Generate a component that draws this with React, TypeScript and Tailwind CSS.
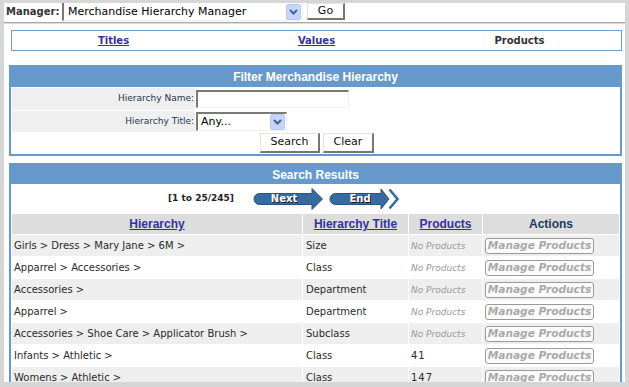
import React from 'react';

const rows = [
  { name: 'Girls > Dress > Mary Jane > 6M >', title: 'Size', products: null },
  { name: 'Apparrel > Accessories >', title: 'Class', products: null },
  { name: 'Accessories >', title: 'Department', products: null },
  { name: 'Apparrel >', title: 'Department', products: null },
  { name: 'Accessories > Shoe Care > Applicator Brush >', title: 'Subclass', products: null },
  { name: 'Infants > Athletic >', title: 'Class', products: '41' },
  { name: 'Womens > Athletic >', title: 'Class', products: '147' },
];

function DropButton() {
  return (
    <span className="flex h-[16px] w-[15px] items-center justify-center rounded-[2px] border border-[#b9c9ef] bg-[#c4d4fb]">
      <svg width="9" height="6" viewBox="0 0 9 6">
        <path d="M1 1 L4.5 4.5 L8 1" fill="none" stroke="#4d6185" strokeWidth="2" />
      </svg>
    </span>
  );
}

function ArrowButton({ label, end }: { label: string; end?: boolean }) {
  return (
    <div className="relative h-[22px] w-[70px]">
      <svg className="absolute inset-0" width="70" height="22" viewBox="0 0 70 22">
        {end ? (
          <>
            <path
              d="M6.5 5.5 H52 V1 L60 11 L52 21 V16.5 H6.5 A5.5 5.5 0 0 1 6.5 5.5 Z"
              fill="#376b9f"
              stroke="#28527f"
            />
            <path d="M60.5 1.5 L68.5 11 L60.5 20.5" fill="none" stroke="#376b9f" strokeWidth="2.6" />
          </>
        ) : (
          <path
            d="M6.5 5.5 H59 V0.5 L69.5 11 L59 21.5 V16.5 H6.5 A5.5 5.5 0 0 1 6.5 5.5 Z"
            fill="#376b9f"
            stroke="#28527f"
          />
        )}
      </svg>
      <span className="absolute left-0 top-[4px] w-[62px] text-center font-['DejaVu_Sans',sans-serif] text-[10px] font-bold leading-[13px] text-white [text-shadow:1px_1px_0_#1a1a1a]">
        {label}
      </span>
    </div>
  );
}

function ClassicButton({ children, className }: { children: React.ReactNode; className: string }) {
  return (
    <button
      className={`flex items-center justify-center border-b-2 border-l border-r-2 border-t border-b-[#77776f] border-l-[#e4e4e4] border-r-[#77776f] border-t-[#e4e4e4] bg-white font-['DejaVu_Sans',sans-serif] text-[11px] text-[#111] ${className}`}
    >
      {children}
    </button>
  );
}

export default function App() {
  return (
    <div className="h-[387px] w-[629px] bg-[#d6d6d6] px-[4px] pb-[5px] pt-[3px]">
      <div className="h-[379px] overflow-hidden bg-white">
        {/* manager bar */}
        <div className="flex h-[18px] items-start">
          <span className="ml-[2px] mt-[3px] w-[56px] font-['DejaVu_Sans',sans-serif] text-[10px] font-bold leading-[12px] text-[#333]">
            Manager:
          </span>
          <div className="flex h-[18px] w-[241px] items-center border-l-2 border-r border-b border-l-[#7a7a72] border-r-[#f0f0ea] border-b-[#f0f0ea] pl-[4px] pr-[1px]">
            <span className="flex-1 pt-[1px] font-['DejaVu_Sans',sans-serif] text-[11px] leading-[14px] text-black">
              Merchandise Hierarchy Manager
            </span>
            <DropButton />
          </div>
          <ClassicButton className="ml-[4px] h-[17px] w-[38px]">Go</ClassicButton>
        </div>
        <div className="mt-[1px] h-[2px] border-t border-b border-t-[#a8a8a8] border-b-[#dcdcdc]" />

        {/* nav */}
        <div className="ml-[7px] mt-[6px] grid h-[21px] w-[611px] grid-cols-3 items-center border border-[#6f9ccc] font-['DejaVu_Sans',sans-serif] text-[10px] font-bold">
          <a className="text-center text-[#333399] underline">Titles</a>
          <a className="text-center text-[#333399] underline">Values</a>
          <span className="text-center text-[#333]">Products</span>
        </div>

        {/* filter */}
        <div className="ml-[5px] mt-[14px] w-[613px] border-2 border-[#6699cc]">
          <div className="flex h-[20px] items-center justify-center bg-[#6699cc] font-['Liberation_Sans',sans-serif] text-[12px] font-bold text-white">
            Filter Merchandise Hierarchy
          </div>
          <table className="w-full border-separate border-spacing-[1px]">
            <tbody>
              <tr>
                <td className="h-[22px] w-[183px] bg-[#efefef] pr-[1px] text-right font-['DejaVu_Sans',sans-serif] text-[9px] text-[#1d3557]">
                  Hierarchy Name:
                </td>
                <td className="p-0">
                  <div className="h-[18px] w-[153px] border-l-2 border-t-2 border-r border-b border-l-[#7a7a72] border-t-[#7a7a72] border-r-[#f0f0ea] border-b-[#f0f0ea]" />
                </td>
              </tr>
              <tr>
                <td className="h-[21px] bg-[#efefef] pr-[1px] text-right font-['DejaVu_Sans',sans-serif] text-[9px] text-[#1d3557]">
                  Hierarchy Title:
                </td>
                <td className="p-0">
                  <div className="flex h-[19px] w-[91px] items-center border-l-2 border-t-2 border-r border-b border-l-[#7a7a72] border-t-[#7a7a72] border-r-[#f0f0ea] border-b-[#f0f0ea] pl-[3px] pr-[1px]">
                    <span className="flex-1 font-['DejaVu_Sans',sans-serif] text-[11px] text-black">Any...</span>
                    <DropButton />
                  </div>
                </td>
              </tr>
              <tr>
                <td colSpan={2} className="h-[20px] p-0">
                  <div className="flex justify-center gap-[3px] pl-[3px]">
                    <ClassicButton className="h-[20px] w-[60px]">Search</ClassicButton>
                    <ClassicButton className="h-[20px] w-[51px]">Clear</ClassicButton>
                  </div>
                </td>
              </tr>
            </tbody>
          </table>
        </div>

        {/* results */}
        <div className="ml-[5px] mt-[7px] w-[613px] border-2 border-[#6699cc]">
          <div className="flex h-[19px] items-center justify-center bg-[#6699cc] font-['Liberation_Sans',sans-serif] text-[12px] font-bold text-white">
            Search Results
          </div>
          <div className="flex h-[29px] items-center pl-[157px]">
            <span className="w-[85px] font-['DejaVu_Sans',sans-serif] text-[9px] font-bold text-[#222]">
              [1 to 25/245]
            </span>
            <ArrowButton label="Next" />
            <div className="w-[6px]" />
            <ArrowButton label="End" end />
          </div>
          <table className="w-full border-separate border-spacing-[1px]">
            <thead>
              <tr className="font-['Liberation_Sans',sans-serif] text-[12px] font-bold">
                <th className="h-[20px] w-[290px] bg-[#dddddd] p-0 text-center text-[#333399] underline">Hierarchy</th>
                <th className="w-[105px] bg-[#dddddd] p-0 text-center text-[#333399] underline">Hierarchy Title</th>
                <th className="w-[73px] bg-[#dddddd] p-0 text-center text-[#333399] underline">Products</th>
                <th className="bg-[#dddddd] p-0 text-center text-[#1c3a63]">Actions</th>
              </tr>
            </thead>
            <tbody className="font-['DejaVu_Sans',sans-serif] text-[10px] text-[#2a2a2a]">
              {rows.map((r, i) => (
                <tr key={i} className={i % 2 === 0 ? 'bg-[#eeeeee]' : 'bg-white'}>
                  <td className="h-[21px] p-0 pl-[2px]">{r.name}</td>
                  <td className="p-0 pl-[3px]">{r.title}</td>
                  <td className="p-0 pl-[2px]">
                    {r.products ? (
                      <span className="tracking-[1px]">{r.products}</span>
                    ) : (
                      <span className="text-[9px] italic text-[#999]">No Products</span>
                    )}
                  </td>
                  <td className="p-0 pl-[2px]">
                    <span className="flex h-[16px] w-[109px] items-center justify-center rounded-[3px] border border-[#9a9a9a] bg-[#fbfbfb] text-[10.6px] font-bold italic text-[#a9a9a9]">
                      Manage Products
                    </span>
                  </td>
                </tr>
              ))}
            </tbody>
          </table>
        </div>
      </div>
    </div>
  );
}
